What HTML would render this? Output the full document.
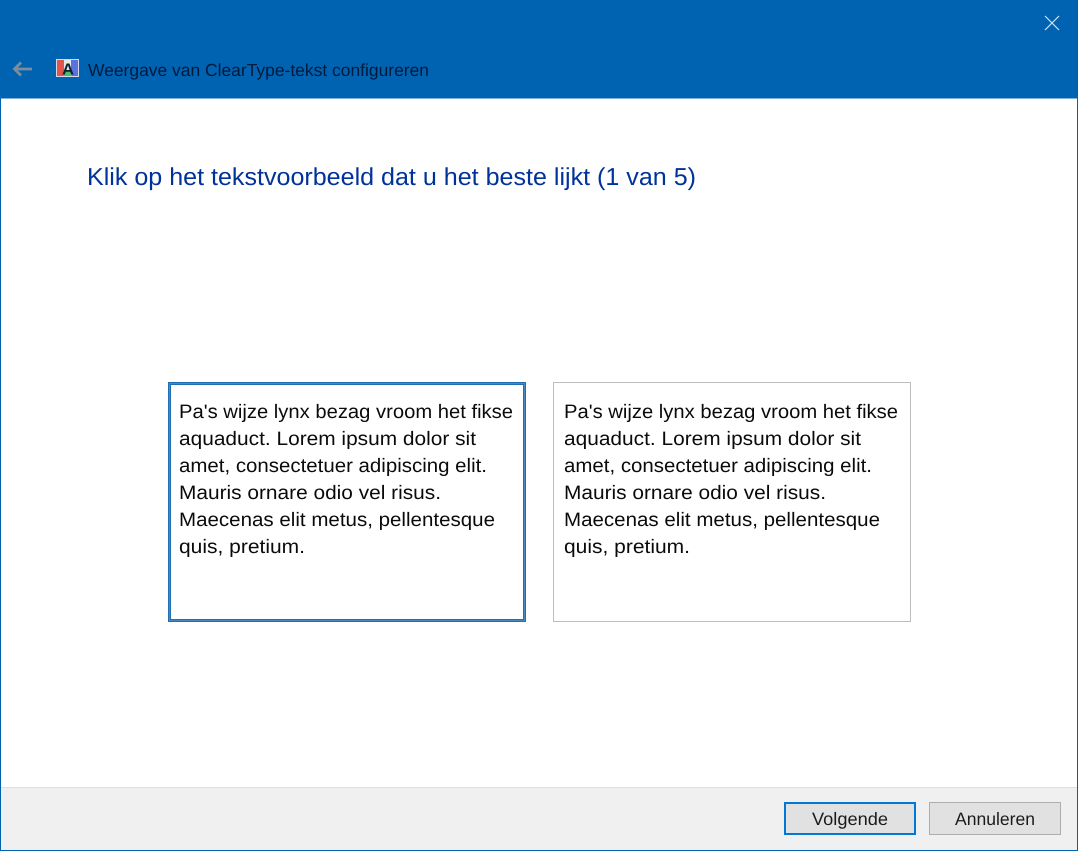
<!DOCTYPE html>
<html lang="nl">
<head>
<meta charset="utf-8">
<title>Weergave van ClearType-tekst configureren</title>
<style>
html,body{margin:0;padding:0;width:1078px;height:851px;overflow:hidden;background:#fff}
svg{display:block}
text{font-family:"Liberation Sans",sans-serif;text-rendering:geometricPrecision}
</style>
</head>
<body>
<svg width="1078" height="851" viewBox="0 0 1078 851" xmlns="http://www.w3.org/2000/svg">
  <rect width="1078" height="851" fill="#fff"/>
  <!-- header -->
  <rect width="1078" height="98.500" fill="#0063b1"/>
  <!-- window border -->
  <rect x="0" y="98" width="1" height="753" fill="#0063b1"/>
  <rect x="1077" y="98" width="1" height="753" fill="#0063b1"/>
  <rect x="0" y="850" width="1078" height="1" fill="#0063b1"/>
  <!-- close -->
  <path d="M1045 16 L1059 30 M1059 16 L1045 30" stroke="#d5e6f5" stroke-width="1.2" fill="none"/>
  <!-- back arrow -->
  <path d="M14 69 H32 M21 62.500 L14.500 69 L21 75.500" stroke="#7d8c9c" stroke-width="2.800" fill="none"/>
  <!-- app icon -->
  <rect x="56" y="59" width="23" height="18" fill="#d4d8e8"/>
  <rect x="57" y="60" width="7" height="16" fill="#e0554c"/>
  <rect x="64" y="60" width="7" height="16" fill="#e4eae6"/>
  <rect x="71" y="60" width="7" height="16" fill="#5a72e0"/>
  <rect x="63" y="71" width="9" height="5" fill="#45c070"/>
  <text x="62" y="74.500" font-size="16" font-weight="bold" fill="#10202c" textLength="12" lengthAdjust="spacingAndGlyphs">A</text>
  <!-- header title -->
  <text x="88" y="76" font-size="17.500" fill="#001a3c" textLength="341" lengthAdjust="spacingAndGlyphs">Weergave van ClearType-tekst configureren</text>
  <!-- heading -->
  <text x="87" y="185" font-size="24.500" fill="#003399" textLength="609" lengthAdjust="spacingAndGlyphs">Klik op het tekstvoorbeeld dat u het beste lijkt (1 van 5)</text>

  <!-- left sample -->
  <rect x="169.500" y="383.500" width="355" height="237" fill="#fff" stroke="#1f6fb2" stroke-width="3"/>
  <rect x="169.500" y="383.500" width="355" height="237" fill="none" stroke="#6fa5d2" stroke-width="1" stroke-dasharray="1 1"/>
  <g font-size="19.500" fill="#0a0a0a">
    <text x="179" y="418" textLength="334" lengthAdjust="spacingAndGlyphs">Pa's wijze lynx bezag vroom het fikse</text>
    <text x="179" y="445" textLength="297" lengthAdjust="spacingAndGlyphs">aquaduct. Lorem ipsum dolor sit</text>
    <text x="179" y="472" textLength="308" lengthAdjust="spacingAndGlyphs">amet, consectetuer adipiscing elit.</text>
    <text x="179" y="499" textLength="262" lengthAdjust="spacingAndGlyphs">Mauris ornare odio vel risus.</text>
    <text x="179" y="526" textLength="316" lengthAdjust="spacingAndGlyphs">Maecenas elit metus, pellentesque</text>
    <text x="179" y="553" textLength="126" lengthAdjust="spacingAndGlyphs">quis, pretium.</text>
  </g>

  <!-- right sample -->
  <rect x="553.500" y="382.500" width="357" height="239" fill="#fff" stroke="#bdbdbd" stroke-width="1"/>
  <g font-size="19.500" fill="#0a0a0a">
    <text x="564" y="418" textLength="334" lengthAdjust="spacingAndGlyphs">Pa's wijze lynx bezag vroom het fikse</text>
    <text x="564" y="445" textLength="297" lengthAdjust="spacingAndGlyphs">aquaduct. Lorem ipsum dolor sit</text>
    <text x="564" y="472" textLength="308" lengthAdjust="spacingAndGlyphs">amet, consectetuer adipiscing elit.</text>
    <text x="564" y="499" textLength="262" lengthAdjust="spacingAndGlyphs">Mauris ornare odio vel risus.</text>
    <text x="564" y="526" textLength="316" lengthAdjust="spacingAndGlyphs">Maecenas elit metus, pellentesque</text>
    <text x="564" y="553" textLength="126" lengthAdjust="spacingAndGlyphs">quis, pretium.</text>
  </g>

  <!-- footer -->
  <rect x="1" y="787" width="1076" height="63" fill="#f0f0f0"/>
  <rect x="1" y="787" width="1076" height="1" fill="#dfdfdf"/>
  <!-- buttons -->
  <rect x="785" y="803" width="130" height="31" fill="#e1e1e1" stroke="#0078d7" stroke-width="2"/>
  <text x="812" y="825" font-size="18" fill="#1a1a1a" textLength="76" lengthAdjust="spacingAndGlyphs">Volgende</text>
  <rect x="929.500" y="802.500" width="131" height="32" fill="#e1e1e1" stroke="#adadad" stroke-width="1"/>
  <text x="955" y="825" font-size="18" fill="#1a1a1a" textLength="80" lengthAdjust="spacingAndGlyphs">Annuleren</text>
</svg>
</body>
</html>
